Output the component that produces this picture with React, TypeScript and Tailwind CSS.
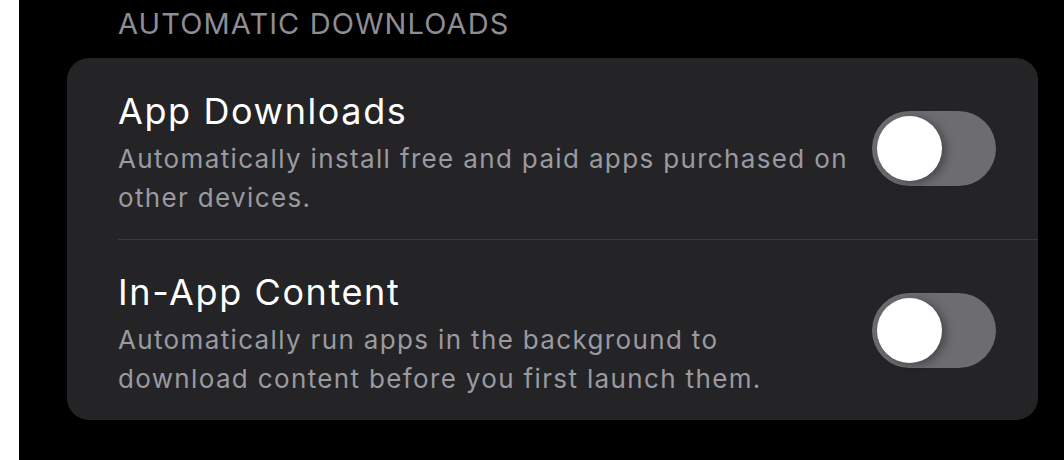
import React from 'react';

type Row = {
  title: string;
  lines: string[];
};

const rows: Row[] = [
  {
    title: 'App Downloads',
    lines: ['Automatically install free and paid apps purchased on', 'other devices.'],
  },
  {
    title: 'In-App Content',
    lines: ['Automatically run apps in the background to', 'download content before you first launch them.'],
  },
];

function Toggle() {
  return (
    <div className="w-[124px] h-[75px] shrink-0 rounded-full bg-[#6c6c71] p-[5px] flex items-center">
      <div className="w-[65px] h-[65px] rounded-full bg-white shadow-[4px_2px_10px_rgba(0,0,0,0.35)]" />
    </div>
  );
}

export default function App() {
  return (
    <div className="w-[1064px] h-[460px] bg-white flex" style={{ fontFamily: 'Inter, "Noto Sans", sans-serif' }}>
      <div className="ml-[19px] flex-1 bg-black">
        <div className="pl-[118px] -ml-[19px] pt-[5px] text-[29px] leading-[38px] text-[#8d8d93] tracking-[1.1px]">
          AUTOMATIC DOWNLOADS
        </div>

        <div className="ml-[48px] mt-[15px] w-[971px] h-[362px] rounded-[22px] bg-[#242426] flex flex-col">
          {rows.map((row, i) => (
            <div key={row.title} className="flex-1 flex flex-col">
              {i > 0 && <div className="ml-[51px] h-px bg-[#3a3a3c]" />}
              <div className="flex-1 flex items-center pl-[51px] pr-[42px]">
                <div className="flex-1 pt-[8px]">
                  <div className="text-[36px] leading-[44px] text-white tracking-[1.6px]">{row.title}</div>
                  <div className="mt-[6px] text-[26px] leading-[39px] text-[#9a9aa0] whitespace-nowrap tracking-[1.35px]">
                    {row.lines.map((l) => (
                      <div key={l}>{l}</div>
                    ))}
                  </div>
                </div>
                <Toggle />
              </div>
            </div>
          ))}
        </div>
      </div>
    </div>
  );
}
